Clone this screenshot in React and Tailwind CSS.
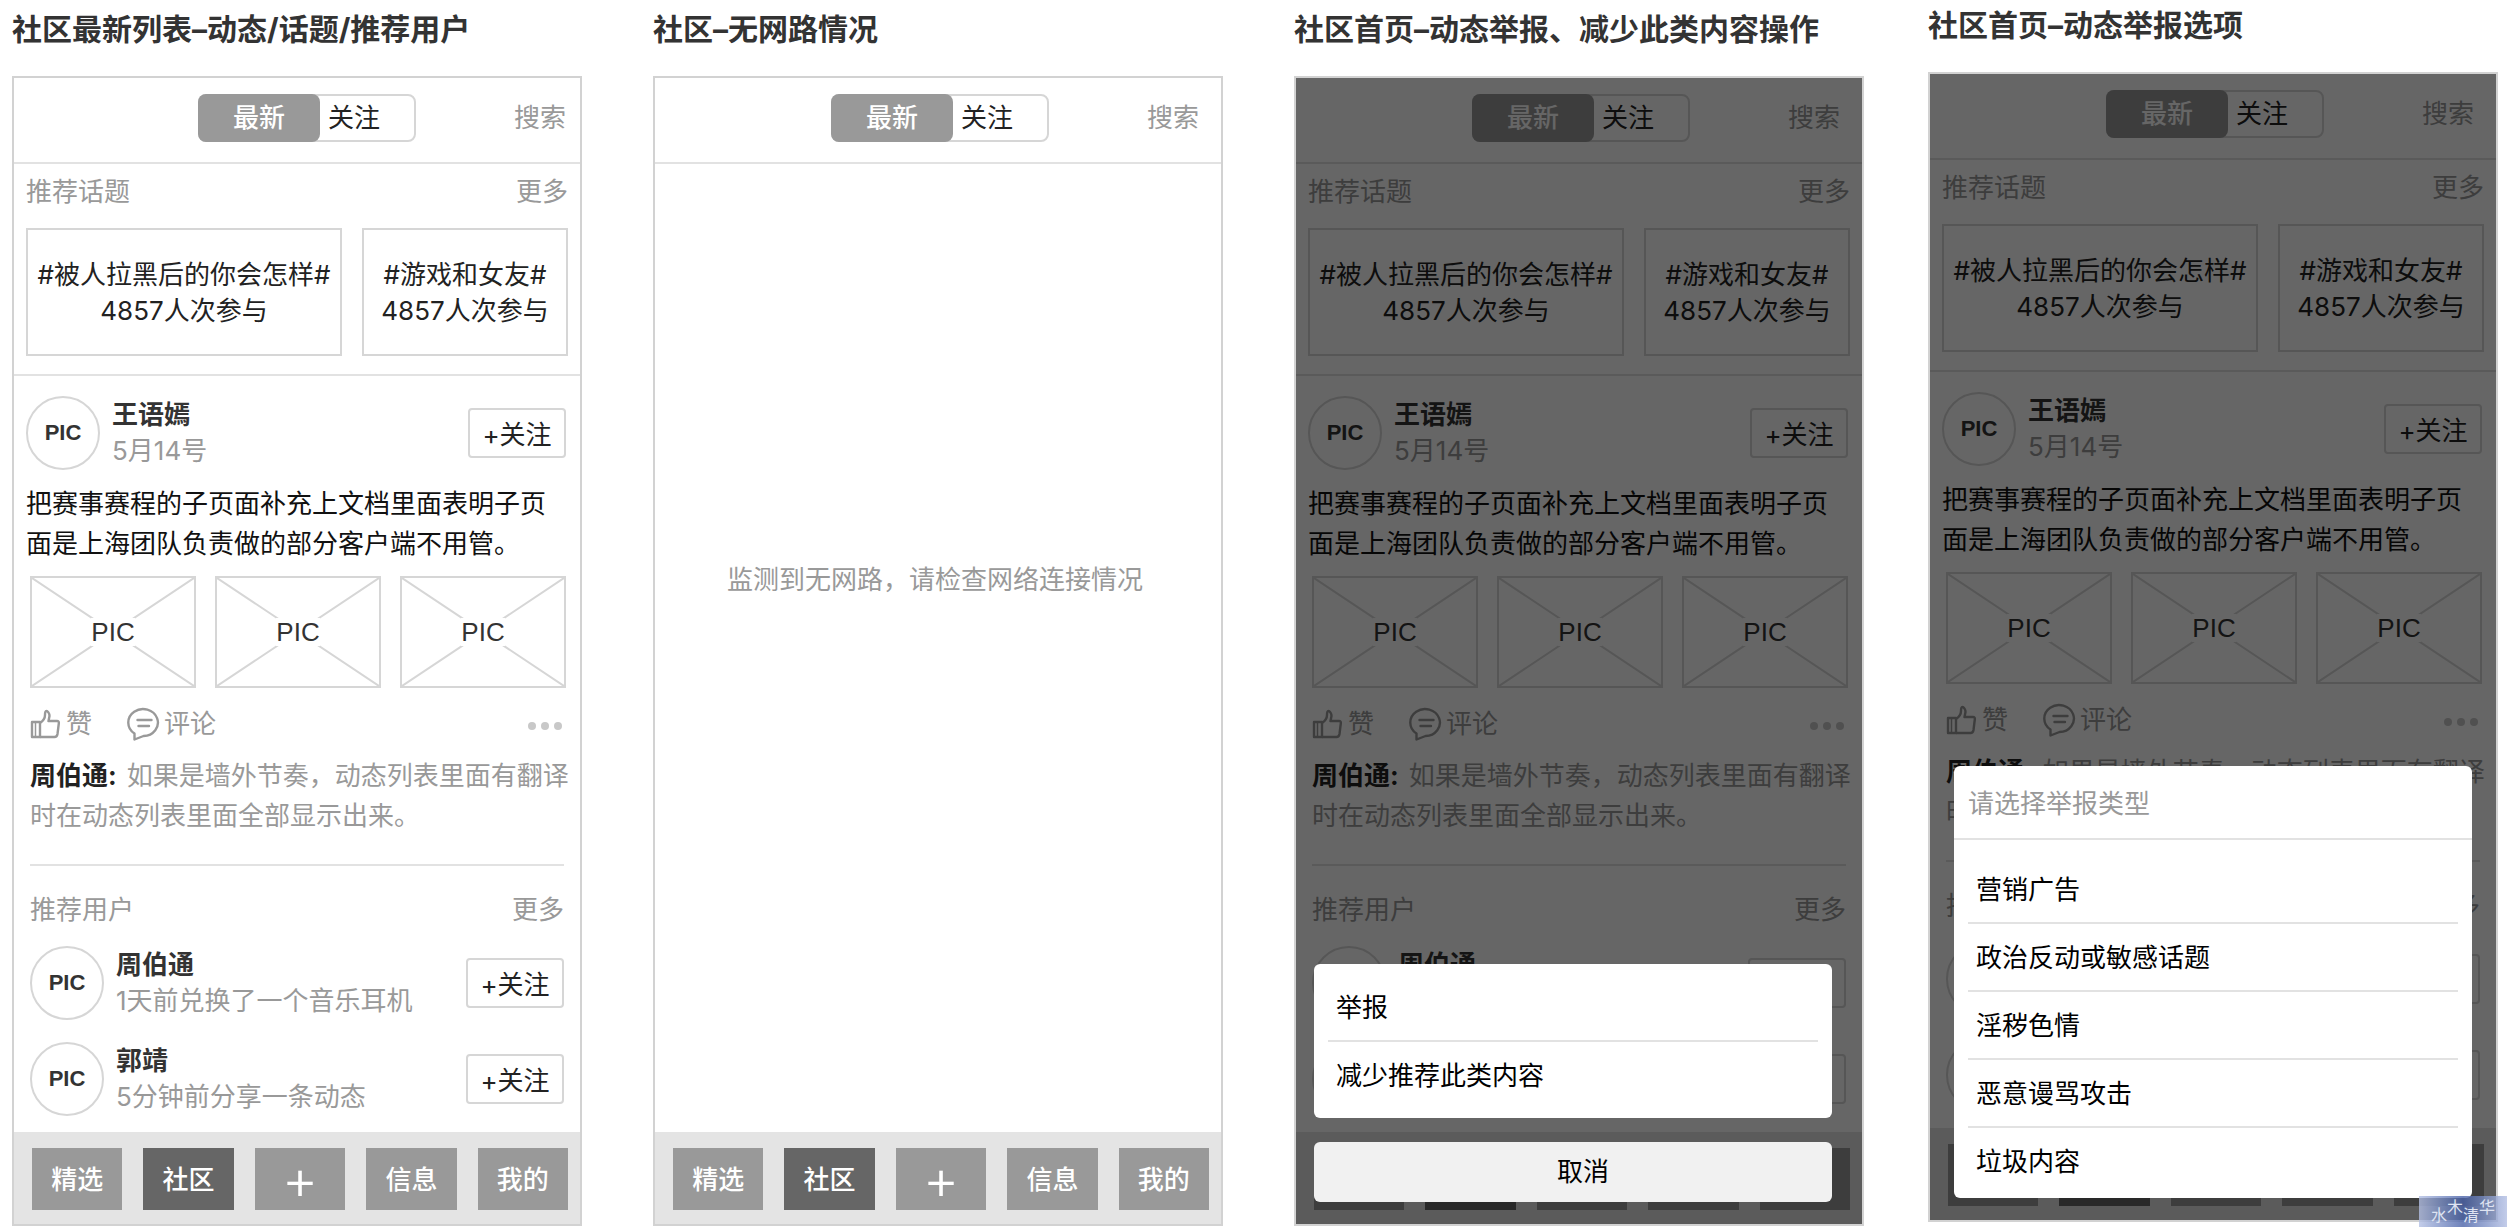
import { useState } from "react";

const navItems = ["精选", "社区", "+", "信息", "我的"];

const topics = [
  { title: "#被人拉黑后的你会怎样#", count: "4857人次参与", width: "grow-[318]" },
  { title: "#游戏和女友#", count: "4857人次参与", width: "grow-[206]" },
];

const suggestedUsers = [
  { name: "周伯通", note: "1天前兑换了一个音乐耳机" },
  { name: "郭靖", note: "5分钟前分享一条动态" },
];

const reportTypes = ["营销广告", "政治反动或敏感话题", "淫秽色情", "恶意谩骂攻击", "垃圾内容"];

function LikeIcon() {
  return (
    <svg viewBox="0 0 30 30" className="h-[30px] w-[30px]" fill="none" stroke="#999" strokeWidth="2.4" strokeLinejoin="round" aria-hidden="true">
      <path d="M2 13h8v15H2z" />
      <path d="M5.500 13v15" strokeWidth="1.500" />
      <path d="M10 14c3-2 5-4 5-8 0-3 .5-4 1.500-4s3 2 3 5l-1 5H27c1.500 0 2 1 1.800 2.500L27.500 25c-.3 2-1 3-3 3H10" />
    </svg>
  );
}

function CommentIcon() {
  return (
    <svg viewBox="0 0 34 34" className="h-[34px] w-[34px]" fill="none" stroke="#999" strokeWidth="2.4" strokeLinejoin="round" strokeLinecap="round" aria-hidden="true">
      <path d="M8.500 26.500A14.800 13.500 0 1 1 17.500 29L8.500 32.500Z" />
      <path d="M11.500 13h14M12.500 19h10.500" />
    </svg>
  );
}

function Avatar() {
  return (
    <div className="flex size-[74px] shrink-0 items-center justify-center rounded-full border-2 border-[#d6d6d6] font-['Liberation_Sans',sans-serif] text-[22px] font-bold text-[#333]">
      PIC
    </div>
  );
}

function PicturePlaceholder() {
  return (
    <div className="relative flex h-28 items-center justify-center border-2 border-[#d6d6d6]">
      <svg className="absolute inset-0 h-full w-full" viewBox="0 0 162 108" preserveAspectRatio="none" stroke="#d6d6d6" strokeWidth="2" aria-hidden="true">
        <path d="M0 0L162 108M162 0L0 108" />
      </svg>
      <span className="relative bg-white font-['Liberation_Sans',sans-serif] leading-7 text-[#333]">PIC</span>
    </div>
  );
}

function UserRow({ name, note }) {
  return (
    <div className="flex items-center gap-3">
      <Avatar />
      <div className="flex-1">
        <p className="font-bold text-[#333]">{name}</p>
        <p className="text-[#999]">{note}</p>
      </div>
      <button type="button" className="h-[50px] w-[98px] rounded-sm border-2 border-[#d6d6d6] pt-1 text-[#222]">
        +关注
      </button>
    </div>
  );
}

function SectionTitle({ title }) {
  return (
    <div className="flex justify-between text-[#999]">
      <h2>{title}</h2>
      <a href="#more">更多</a>
    </div>
  );
}

function Header({ className }) {
  const [tab, setTab] = useState("最新");
  const active = "rounded-lg bg-[#999] font-medium text-white";
  const idle = "text-[#222]";

  return (
    <header className={`flex items-center justify-end gap-[98px] border-b-2 border-[#e2e2e2] pt-4 pb-5 ${className}`}>
      <div className="relative flex h-12 w-[218px] rounded-lg">
        <div className="pointer-events-none absolute inset-0 rounded-lg border-2 border-[#d6d6d6]" />
        <button type="button" onClick={() => setTab("最新")} className={`relative w-[122px] ${tab === "最新" ? active : idle}`}>
          最新
        </button>
        <button type="button" onClick={() => setTab("关注")} className={`relative flex-1 pl-2 text-left ${tab === "关注" ? active : idle}`}>
          关注
        </button>
      </div>
      <a href="#search" className="text-[#999]">搜索</a>
    </header>
  );
}

function Feed() {
  return (
    <main className="flex-1 pb-4">
      <section className="border-b-2 border-[#e2e2e2] px-3 pt-2.5 pb-[18px]">
        <SectionTitle title="推荐话题" />
        <div className="mt-[18px] flex gap-5">
          {topics.map((topic) => (
            <div key={topic.title} className={`flex h-32 basis-0 flex-col items-center justify-center border-2 border-[#d6d6d6] pt-0.5 whitespace-nowrap text-[#222] ${topic.width}`}>
              <p>{topic.title}</p>
              <p>{topic.count}</p>
            </div>
          ))}
        </div>
      </section>

      <article className="pt-5">
        <div className="pr-3.5 pl-3">
          <UserRow name="王语嫣" note="5月14号" />
          <p className="mt-3.5 leading-10 text-[#111]">把赛事赛程的子页面补充上文档里面表明子页面是上海团队负责做的部分客户端不用管。</p>
        </div>
        <div className="mt-3 mr-3.5 ml-4 grid grid-cols-3 gap-[19px]">
          <PicturePlaceholder />
          <PicturePlaceholder />
          <PicturePlaceholder />
        </div>
        <div className="mt-[18px] mr-[18px] ml-4 flex items-center text-[#999]">
          <button type="button" className="flex items-center gap-1.5">
            <LikeIcon />
            赞
          </button>
          <button type="button" className="ml-[34px] flex items-center gap-1">
            <CommentIcon />
            评论
          </button>
          <button type="button" aria-label="更多操作" className="ml-auto flex gap-[5px] pt-1">
            <span className="size-2 rounded-full bg-[#c8c8c8]" />
            <span className="size-2 rounded-full bg-[#c8c8c8]" />
            <span className="size-2 rounded-full bg-[#c8c8c8]" />
          </button>
        </div>
        <p className="mt-3.5 mr-2 ml-4 leading-10 text-[#999]">
          <b className="mr-1 text-[#222]">周伯通: </b>
          如果是墙外节奏，动态列表里面有翻译时在动态列表里面全部显示出来。
        </p>
      </article>

      <section className="mt-7 mr-4 ml-4 border-t-2 border-[#e2e2e2] pt-[26px]">
        <SectionTitle title="推荐用户" />
        <div className="mt-[18px] flex flex-col gap-[22px]">
          {suggestedUsers.map((user) => (
            <UserRow key={user.name} name={user.name} note={user.note} />
          ))}
        </div>
      </section>
    </main>
  );
}

function TabBar() {
  return (
    <nav className="flex gap-[21px] bg-[#e4e4e4] pt-4 pr-3 pb-3.5 pl-[18px] font-medium">
      {navItems.map((item) => (
        <button
          key={item}
          type="button"
          aria-label={item === "+" ? "发布" : undefined}
          className={`h-[62px] flex-1 text-white ${item === "社区" ? "bg-[#666]" : "bg-[#999]"} ${item === "+" ? "text-[56px] leading-[62px] font-light" : "pt-0.5"}`}
        >
          {item}
        </button>
      ))}
    </nav>
  );
}

function Screen({ title, headerClass = "pr-[22px]", overlay, children }) {
  return (
    <section className="flex flex-col">
      <h1 className="mb-[26px] text-[30px] leading-[42px] font-bold whitespace-nowrap text-[#333]">{title}</h1>
      <div className="relative flex flex-1 flex-col border-2 border-[#d2d2d2]">
        <Header className={headerClass} />
        {children}
        <TabBar />
        {overlay && <div className="absolute inset-0 flex flex-col justify-end bg-black/60 pb-[22px]">{overlay}</div>}
      </div>
    </section>
  );
}

function OptionList({ options }) {
  return (
    <ul className="mx-3.5 divide-y-2 divide-[#e2e2e2] text-black">
      {options.map((option) => (
        <li key={option}>
          <button type="button" className="w-full px-2 pt-4 pb-3.5 text-left">{option}</button>
        </li>
      ))}
    </ul>
  );
}

function ActionSheet() {
  return (
    <div className="mr-[30px] ml-[18px]">
      <div className="rounded-md bg-white py-2.5">
        <OptionList options={["举报", "减少推荐此类内容"]} />
      </div>
      <button type="button" className="mt-6 h-[60px] w-full rounded-md bg-[#f1f1f1] pl-5 text-black">取消</button>
    </div>
  );
}

function ReportDialog() {
  return (
    <div role="dialog" aria-label="请选择举报类型" className="mx-6 rounded-md bg-white pb-1">
      <p className="mb-4 border-b-2 border-[#e2e2e2] px-3.5 pt-5 pb-4 text-[#999]">请选择举报类型</p>
      <OptionList options={reportTypes} />
    </div>
  );
}

function Watermark() {
  return (
    <div className="absolute right-[5px] bottom-[5px] flex h-[31px] w-[88px] justify-center bg-linear-to-r from-[#b4c0e4]/80 via-[#4a62a8]/80 to-[#b4c0e4]/80 font-['Noto_Sans_CJK_SC',sans-serif] text-base leading-5 text-[#dfe4f2]">
      <span className="pt-2">水</span>
      <span>木</span>
      <span className="pt-2">清</span>
      <span>华</span>
    </div>
  );
}

export default function App() {
  return (
    <div className="relative grid min-h-screen grid-cols-[1852fr_570fr] gap-16 bg-white pr-3.5 pb-1.5 pl-3 font-[Inter,'Noto_Sans_CJK_SC',sans-serif] text-[26px] leading-9">
      <div className="grid grid-cols-3 gap-[71px] pt-2">
        <Screen title="社区最新列表–动态/话题/推荐用户" headerClass="pr-3.5">
          <Feed />
        </Screen>
        <Screen title="社区–无网路情况">
          <main className="flex-1 pt-[398px] pr-1.5 text-center text-[#999]">监测到无网路，请检查网络连接情况</main>
        </Screen>
        <Screen title="社区首页–动态举报、减少此类内容操作" overlay={<ActionSheet />}>
          <Feed />
        </Screen>
      </div>
      <div className="grid pt-1 pb-1">
        <Screen title="社区首页–动态举报选项" overlay={<ReportDialog />}>
          <Feed />
        </Screen>
      </div>
      <Watermark />
    </div>
  );
}
